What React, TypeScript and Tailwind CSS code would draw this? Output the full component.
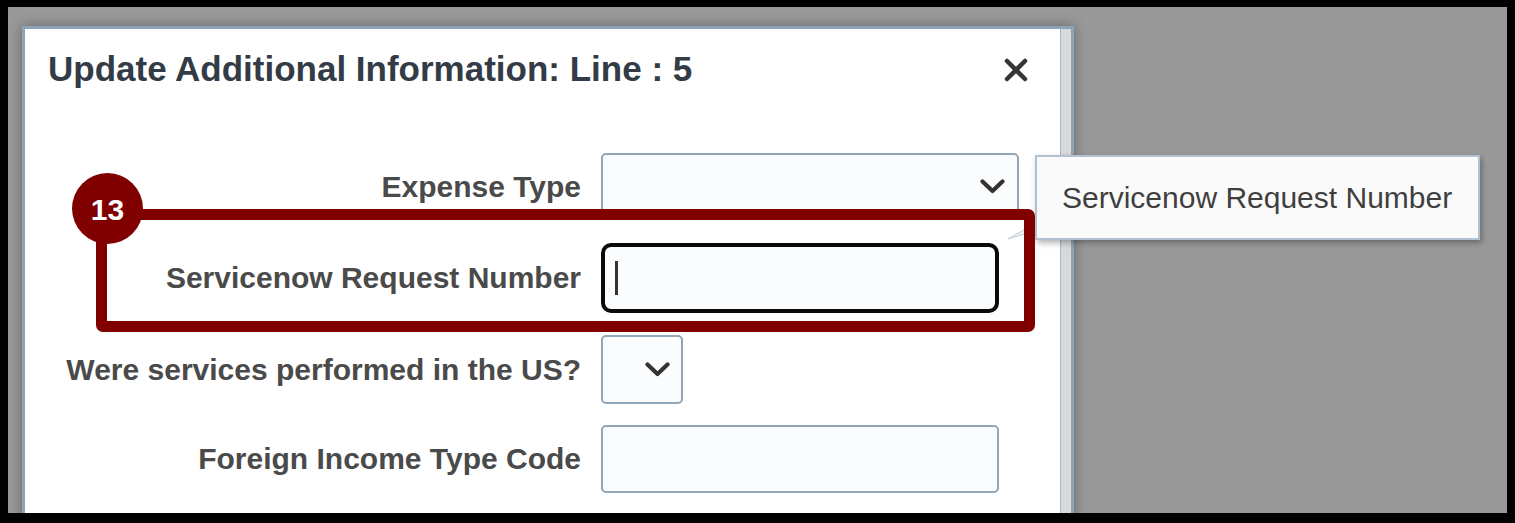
import React from "react";

const font = { fontFamily: '"Liberation Sans", Arial, sans-serif' };

function Chevron() {
  return (
    <svg width="25" height="15" viewBox="0 0 25 15" fill="none">
      <polyline points="2.5,2.5 12.5,12 22.5,2.5" stroke="#333333" strokeWidth="4.2" strokeLinecap="round" strokeLinejoin="round" />
    </svg>
  );
}

function Label({ children }: { children: React.ReactNode }) {
  return (
    <div className="w-[556px] shrink-0 text-right text-[30px] font-bold leading-[36px] text-[#4a4a4a] whitespace-nowrap">
      {children}
    </div>
  );
}

export default function App() {
  return (
    <div className="relative w-[1515px] h-[523px] bg-black pt-[7px] pl-[8px] pr-[8px] pb-[10px]" style={font}>
      <div className="w-full h-full bg-[#999999] overflow-hidden">
        <div className="ml-[14px] mt-[19px] w-[1052px] h-[520px] flex bg-white border-[3px] border-[#8da3b9] shadow-[0_0_12px_rgba(0,0,0,0.35)]">
          <div className="flex-1 flex flex-col pt-[20px] pr-[31px]">
            <div className="flex items-center justify-between pl-[23px]">
              <h1 className="text-[35px] font-bold leading-[40px] text-[#333c46] whitespace-nowrap">
                Update Additional Information: Line : 5
              </h1>
              <svg width="26" height="26" viewBox="0 0 26 26" className="mt-[2px]">
                <line x1="4" y1="4" x2="22" y2="22" stroke="#353535" strokeWidth="4.5" strokeLinecap="round" />
                <line x1="22" y1="4" x2="4" y2="22" stroke="#353535" strokeWidth="4.5" strokeLinecap="round" />
              </svg>
            </div>

            <div className="mt-[64px] flex flex-col">
              <div className="flex items-center gap-[20px]">
                <Label>Expense Type</Label>
                <div className="w-[418px] h-[67px] rounded-[5px] border-2 border-[#93a6b8] bg-[#fbfcfe] flex items-center justify-end pr-[12px]">
                  <Chevron />
                </div>
              </div>

              <div className="mt-[23px] flex items-center gap-[20px]">
                <Label>Servicenow Request Number</Label>
                <div className="w-[398px] h-[70px] rounded-[10px] border-4 border-[#0a0a0a] bg-[#fbfcfe] flex items-center pl-[10px]">
                  <div className="w-[2.5px] h-[34px] bg-[#333333]" />
                </div>
              </div>

              <div className="mt-[22px] flex items-center gap-[20px]">
                <Label>Were services performed in the US?</Label>
                <div className="w-[82px] h-[69px] rounded-[5px] border-2 border-[#93a6b8] bg-[#fbfcfe] flex items-center justify-end pr-[11px]">
                  <Chevron />
                </div>
              </div>

              <div className="mt-[21px] flex items-center gap-[20px]">
                <Label>Foreign Income Type Code</Label>
                <div className="w-[398px] h-[68px] rounded-[5px] border-2 border-[#93a6b8] bg-[#fbfcfe]" />
              </div>
            </div>
          </div>
          <div className="w-[11px] shrink-0 bg-[#d9d9d9] border-l border-[#a9b8c8]" />
        </div>
      </div>

      {/* tooltip tail */}
      <svg className="absolute left-[1004px] top-[222px]" width="32" height="20" viewBox="0 0 32 20">
        <polygon points="30,2 4,17 30,9" fill="#eef0f3" stroke="#c3ccd6" strokeWidth="1" />
      </svg>

      {/* tooltip */}
      <div className="absolute left-[1035px] top-[155px] w-[445px] h-[85px] bg-[#fafafa] border-2 border-[#b2c1d0] shadow-[2px_3px_6px_rgba(0,0,0,0.3)] flex items-center pl-[25px]">
        <span className="text-[30px] leading-[36px] text-[#3f3f3f] whitespace-nowrap">Servicenow Request Number</span>
      </div>

      {/* annotation box */}
      <div className="absolute left-[96px] top-[209px] w-[939px] h-[123px] border-[11px] border-[#800000] rounded-[7px]" />
      <div className="absolute left-[72px] top-[173px] w-[71px] h-[71px] rounded-full bg-[#800000] flex items-center justify-center">
        <span className="text-[30px] font-bold leading-none text-white mt-[2px]">13</span>
      </div>
    </div>
  );
}
